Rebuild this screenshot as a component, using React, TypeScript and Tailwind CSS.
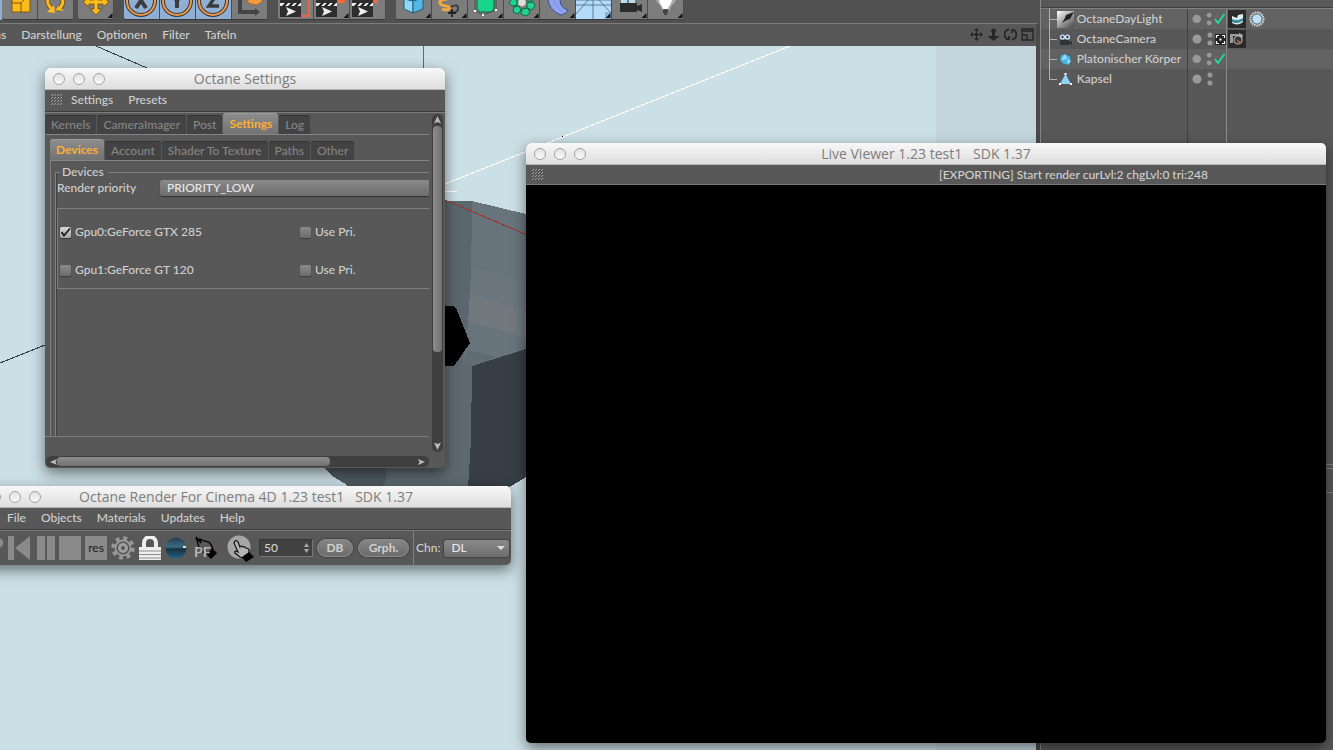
import { useState } from "react";
import type { ReactNode } from "react";
import clsx from "clsx";

/* ---------------- DATA ---------------- */

const viewportMenu = ["as", "Darstellung", "Optionen", "Filter", "Tafeln"];
const mainTabs = ["Kernels", "CameraImager", "Post", "Settings", "Log"];
const subTabs = ["Devices", "Account", "Shader To Texture", "Paths", "Other"];

const gpus = [
  { name: "Gpu0:GeForce GTX 285", enabled: true },
  { name: "Gpu1:GeForce GT 120", enabled: false },
];

/* ---------------- SHARED ---------------- */

const Grip = () => (
  <svg className="h-3 w-3 shrink-0" viewBox="0 0 12 12" stroke="#a8a8a8" strokeWidth="0.9">
    {[0, 3, 6, 9].map((y) =>
      [0, 3, 6, 9].map((x) => <path key={`${x}-${y}`} d={`M${x} ${y + 2}l2 -2`} />)
    )}
  </svg>
);

type WindowProps = {
  title: string;
  className: string;
  children: ReactNode;
};

const Window = ({ title, className, children }: WindowProps) => (
  <section
    className={clsx(
      "absolute flex flex-col overflow-hidden rounded-[5px] bg-[#585858] shadow-[0_5px_14px_rgba(0,0,0,0.5)]",
      className
    )}
  >
    <header className="relative flex h-[22px] shrink-0 items-center justify-center border-b border-[#b5b5b5] bg-linear-to-b from-[#f8f8f8] to-[#dedede]">
      <div className="absolute left-2 flex gap-2">
        {["Close", "Minimize", "Zoom"].map((label) => (
          <button
            key={label}
            aria-label={label}
            className="h-3 w-3 rounded-full border border-[#a3a3a3] bg-linear-to-b from-[#e2e2e2] to-[#fafafa]"
          />
        ))}
      </div>
      <h2 className="font-['Open_Sans',sans-serif] text-[14px] leading-5 font-normal whitespace-pre text-[#7d7d7d]">{title}</h2>
    </header>
    {children}
  </section>
);

const MenuBar = ({ items }: { items: string[] }) => (
  <nav className="flex h-[23px] shrink-0 items-center gap-[15px] border-b border-[#7c7c7c] pb-0.5 pl-1.5 shadow-[inset_0_-1px_0_#3c3c3c]">
    <Grip />
    <div className="-ml-[7px] flex gap-[15px]">
      {items.map((item) => (
        <button key={item}>{item}</button>
      ))}
    </div>
  </nav>
);

type TabsProps = {
  items: string[];
  active: string;
  onSelect: (item: string) => void;
};

const Tabs = ({ items, active, onSelect }: TabsProps) => (
  <div role="tablist" className="flex h-[22px] shrink-0 items-end gap-px border-b border-[#858585]">
    {items.map((item) => (
      <button
        key={item}
        role="tab"
        aria-selected={item === active}
        onClick={() => onSelect(item)}
        className={clsx(
          "rounded-t-[3px] border-t px-1.5 pb-px whitespace-nowrap",
          item === active
            ? "h-[21px] border-[#9a9a9a] bg-linear-to-b from-[#8c8c8c] to-[#727272] font-bold text-[#fbb034]"
            : "h-[19px] border-[#333] bg-[#434343] text-[#858585]"
        )}
      >
        {item}
      </button>
    ))}
  </div>
);

const CheckBox = ({ label, checked = false }: { label: string; checked?: boolean }) => (
  <label className="flex items-center gap-1">
    <span className="relative flex">
      <input
        type="checkbox"
        defaultChecked={checked}
        className="peer h-[11px] w-[11px] appearance-none rounded-[2px] bg-linear-to-b from-[#8a8a8a] to-[#6c6c6c] shadow-[0_1px_1px_#3a3a3a] checked:from-[#d6d6d6] checked:to-[#a8a8a8]"
      />
      <svg className="pointer-events-none absolute inset-0 hidden peer-checked:block" viewBox="0 0 11 11" fill="none" stroke="#1c1c1c" strokeWidth="1.8">
        <path d="M1.500 5l2.500 3.500L10 1.500" />
      </svg>
    </span>
    {label}
  </label>
);

/* ---------------- MAIN TOOLBAR ---------------- */

const Corner = () => <path d="M34.500 13v5h-5z" fill="#151515" />;

const Tool = ({ label, active, more, children }: { label: string; active?: boolean; more?: boolean; children: ReactNode }) => (
  <button
    aria-label={label}
    className={clsx("h-5 w-9 border-r border-b border-[#4b4b4b]", active ? "bg-[#8fb0d4]" : "bg-[#7c7c7c]")}
  >
    <svg className="h-[19px] w-full" viewBox="0 0 35 19">
      {children}
      {more && <Corner />}
    </svg>
  </button>
);

const AxisTool = ({ axis }: { axis: string }) => (
  <Tool label={`Axis ${axis}`} active>
    <circle cx="17" cy="1" r="14" fill="none" stroke="#3a3a3a" strokeWidth="4" />
    <circle cx="17" cy="1" r="14" fill="none" stroke="#f19a45" strokeWidth="2" />
    {axis === "X" && <path d="M12 -7L22 8M22 -7L12 8" stroke="#3c3c3c" strokeWidth="4" />}
    {axis === "Y" && <path d="M12 -7L17 1L22 -7M17 0V8" fill="none" stroke="#3c3c3c" strokeWidth="4" />}
    {axis === "Z" && <path d="M12 -6H21L13 6H23" fill="none" stroke="#3c3c3c" strokeWidth="3.5" />}
  </Tool>
);

const Clapper = () => (
  <>
    <path d="M2 -1h21v18H2z" fill="#2e2e2e" />
    <path d="M2 3h21v3H2z" fill="#eee" />
    <path d="M4 6l3-3h3L7 6zM10 6l3-3h3l-3 3zM16 6l3-3h3l-3 3z" fill="#1a1a1a" />
    <path d="M8 7l10 4.500L8 16l2-4.500z" fill="#eee" />
  </>
);

const ToolGroup = ({ children }: { children: ReactNode }) => (
  <div className="flex overflow-hidden rounded-b-[3px] border-b border-[#3a3a3a]">{children}</div>
);

const MainToolbar = () => (
  <div className="flex h-[23px] shrink-0 gap-2.5 overflow-hidden bg-[#515151] pb-[3px]">
    <div className="flex gap-1">
      <div className="flex">
        <div className="h-5 w-0.5 bg-[#8fb0d4]" />
        <ToolGroup>
          <Tool label="Scale">
            <path d="M10 -4h18v16H10z" fill="#fdbb1c" stroke="#7b5a12" />
            <path d="M10 3h9v9M19 3l6-6" fill="none" stroke="#7b5a12" />
          </Tool>
          <Tool label="Rotate">
            <path d="M10 -1a8.500 8.500 0 0 0 4 9.500M24 -2a8.500 8.500 0 0 1-5 11.500" fill="none" stroke="#6a4c0d" strokeWidth="4.500" />
            <path d="M10 -1a8.500 8.500 0 0 0 4 9.500M24 -2a8.500 8.500 0 0 1-5 11.500" fill="none" stroke="#fdbb1c" strokeWidth="3" />
            <path d="M9 12l8 1-1-8zM26 11l-8-1 2-4z" fill="#fdbb1c" />
          </Tool>
        </ToolGroup>
      </div>
      <ToolGroup>
        <Tool label="Move" more>
          <path d="M5 2l6-5v3h5v-5h4v5h5v-3l6 5-6 5V4h-5v5h3.500L18 15l-5.500-6H16V4h-5v3z" fill="#fdbb1c" stroke="#6a4c0d" strokeWidth="0.800" />
        </Tool>
      </ToolGroup>
    </div>
    <ToolGroup>
      <AxisTool axis="X" />
      <AxisTool axis="Y" />
      <AxisTool axis="Z" />
      <Tool label="Coordinate system">
        <path d="M8 -2v14h16" fill="none" stroke="#444" strokeWidth="4" />
        <path d="M23 8l5 4-5 4z" fill="#444" />
        <path d="M16 -3h14v5l-6 3-8-2z" fill="#f49a3f" stroke="#a3561a" strokeWidth="0.600" />
      </Tool>
    </ToolGroup>
    <ToolGroup>
      <Tool label="Render view">
        <path d="M23 16h8V-2" fill="none" stroke="#f0683c" strokeWidth="1.800" />
        <Clapper />
      </Tool>
      <Tool label="Render to picture viewer" more>
        <path d="M20 -1h11v4H20z" fill="#f0683c" />
        <Clapper />
      </Tool>
      <Tool label="Render settings">
        <path d="M16 -1h12v4H16z" fill="#f0683c" />
        <Clapper />
      </Tool>
    </ToolGroup>
    <ToolGroup>
      <Tool label="Cube" more>
        <path d="M8 -1l9 2v12l-9-4z" fill="#8bd8fa" stroke="#245a75" />
        <path d="M17 1l10-3V9l-10 4z" fill="#53b7e6" stroke="#245a75" />
      </Tool>
      <Tool label="Spline" more>
        <path d="M14 10c8-6 13-6 12-1s-5 3-8 2" fill="none" stroke="#3a3a3a" strokeWidth="1.800" />
        <path d="M17 -2c-4 2-10 1-9 5s7 2 9 4-3 4-7 2" fill="none" stroke="#f4a63f" strokeWidth="3" />
        <path d="M20 9v8M16 13h8" stroke="#222" strokeWidth="1.800" />
      </Tool>
      <Tool label="Subdivision surface" more>
        <path d="M9 -2h17v11l-3 3H12l-3-3z" fill="#17d488" stroke="#0b6b45" />
        <path d="M7 -1v12l8 4 13-5V-1" fill="none" stroke="#444" strokeWidth="0.800" />
        <path d="M6 10h2v2H6zM14 14h2v2h-2zM27 9h2v2h-2z" fill="#fff" />
      </Tool>
      <Tool label="Array" more>
        <g fill="#1fd491" stroke="#0b6b45">
          <path d="M8 -1l5 1v5l-5 1-3-3zM10 7l5-1 2 4-3 4-5-2zM18 9l6-1 2 5-4 3-5-2zM23 3l6-1 2 4-3 4-5-2zM22 -3h6v4h-6z" />
        </g>
        <path d="M14 0l4-1 4 1v5l-4 2-4-2z" fill="#ddd" stroke="#666" strokeWidth="0.600" />
      </Tool>
      <Tool label="Deformer" more>
        <path d="M8 -2c0 8 5 14 13 17 4-1 6-3 7-5-7-2-8-7-8-12z" fill="#8fa2ee" stroke="#3d4b8f" />
        <path d="M14 -2c1 6 3 10 8 13" fill="none" stroke="#7f92e0" />
      </Tool>
      <Tool label="Floor" active more>
        <path d="M0 -1h35v13h-6v7H0z" fill="#b5dbfa" />
        <path d="M0 5h35M17 -1v20M13 -1L0 14M22 -1l13 14M0 0h35" fill="none" stroke="#47657e" strokeWidth="0.800" />
      </Tool>
      <Tool label="Camera" more>
        <path d="M8 3h17v9H8zM25 6l5-2v8l-5-2z" fill="#2d2d2d" />
        <path d="M9 0h6v3H9zM17 0h6v3h-6z" fill="#b8ddf2" />
      </Tool>
      <Tool label="Light" more>
        <path d="M8 -2h20c0 6-5 6-6 12h-8c-1-6-6-6-6-12z" fill="#a9a9a9" />
        <path d="M11 -2h13c0 6-3 7-4 11h-5c-1-4-4-5-4-11z" fill="#fff" />
        <path d="M15 10h5M15 12h5M16 14h3" stroke="#333" strokeWidth="1.400" />
      </Tool>
    </ToolGroup>
  </div>
);

/* ---------------- VIEWPORT ---------------- */

const ViewportControls = () => (
  <div className="ml-auto flex items-center gap-1 pr-0.5 text-[#262626]">
    <button aria-label="Pan view">
      <svg className="h-[13px] w-[13px]" viewBox="0 0 13 13" fill="currentColor">
        <path d="M6.500 0L9 3H4zM6.500 13L4 10h5zM0 6.500L3 4v5zM13 6.500L10 9V4zM5 5h3v3H5zM6 3h1v2H6zM6 8h1v2H6zM3 6h2v1H3zM8 6h2v1H8z" />
      </svg>
    </button>
    <button aria-label="Zoom view">
      <svg className="h-[13px] w-[13px]" viewBox="0 0 13 13" fill="currentColor">
        <path d="M6.500 0L10 3.500H8V8h4.500l-6 5-6-5H5V3.500H3z" />
      </svg>
    </button>
    <button aria-label="Rotate view">
      <svg className="h-[13px] w-[13px]" viewBox="0 0 13 13" fill="none" stroke="currentColor" strokeWidth="1.800">
        <path d="M5 1.500a5 5 0 0 0-1.500 9.500M8 11.500A5 5 0 0 0 9.500 2M8 5V2h3M5 8v3H2" />
      </svg>
    </button>
    <button aria-label="Toggle view">
      <svg className="h-[13px] w-[13px]" viewBox="0 0 13 13" fill="none" stroke="currentColor" strokeWidth="1.400">
        <path d="M1 1h11v11H1zM1 3h11M1 7h5v5" />
      </svg>
    </button>
  </div>
);

const Scene = () => (
  <svg className="absolute inset-0 h-full w-full" shapeRendering="crispEdges">
    <rect x="936" width="110" height="100%" fill="#c3d6de" />
    <g transform="translate(0 -46)">
      <path d="M324 468l8 8 12 7 4 3h124V366z" fill="#505a61" />
      <path d="M382 201h90v286h-86z" fill="#5b676e" />
      <path d="M440 366h32v74l-4 48h-86z" fill="#5d696f" />
      <path d="M472 201l54 13v136l-54 16h-10l6-41 3-40z" fill="#68747b" />
      <path d="M471 267l55 15v30l-56-18z" fill="#6b757d" />
      <path d="M470 293l56 18v27l-58-17z" fill="#71797f" />
      <path d="M467 350l30 7-25 9h-10z" fill="#5f6d73" />
      <path d="M472 366l54-17v128l-18 11h-40l3-48z" fill="#383e46" />
      <path d="M440 306h13l3 2 14 35-16 23h-14z" fill="#000" />
      <g fill="none">
        <path d="M96 46l51 22M0 363l45-18" stroke="#33424a" />
        <path d="M445 184L790 46M445 191l12 1" stroke="#fff" />
        <path d="M445 200l82 35" stroke="#a52f2f" />
      </g>
      <rect x="423" y="46" width="1" height="24" fill="#159a3c" />
      <rect x="562" y="136" width="1" height="1" fill="#000" />
    </g>
  </svg>
);

/* ---------------- OBJECT MANAGER ---------------- */

const Check = () => (
  <svg className="h-3 w-3" viewBox="0 0 12 12" fill="none" stroke="#1fe0a0" strokeWidth="1.800">
    <path d="M1 6l3 4L10.500 1" />
  </svg>
);

const objects = [
  {
    name: "OctaneDayLight",
    icon: (
      <svg viewBox="0 0 17 17">
        <defs>
          <linearGradient id="sky" x2="0.800" y2="1">
            <stop stopColor="#fff" />
            <stop offset="1" stopColor="#555" />
          </linearGradient>
        </defs>
        <path d="M0 0h17v17H0z" fill="url(#sky)" />
        <path d="M17 1l-8 3-1 3-3 5 5-3 3-1z" fill="#222" />
      </svg>
    ),
    state: <Check />,
    tags: (
      <>
        <svg className="h-[18px] w-[18px]" viewBox="0 0 18 18">
          <path d="M0 0h18v18H0z" fill="#2b2b2b" />
          <path d="M4 6l5 2 1-3 5-1v8c-3 3-8 3-11 1z" fill="#dcecef" />
          <path d="M4 9c4 2 8 1 11-1v3c-4 2-8 3-11 1z" fill="#3d8a9b" />
        </svg>
        <svg className="h-4 w-4" viewBox="0 0 16 16">
          <circle cx="8" cy="8" r="6.500" fill="none" stroke="#d6d6d6" strokeWidth="2" strokeDasharray="1.600 0.700" />
          <circle cx="8" cy="8" r="4.800" fill="#bfe2fb" stroke="#6c8aa2" strokeWidth="0.700" />
        </svg>
      </>
    ),
  },
  {
    name: "OctaneCamera",
    icon: (
      <svg viewBox="0 0 17 17">
        <path d="M3 9h9v5H3zM12 11l3-1v4l-3-1z" fill="#2d3338" />
        <circle cx="5.500" cy="6" r="1.900" fill="#335" stroke="#cfe8fa" strokeWidth="1.400" />
        <circle cx="10.500" cy="6" r="1.900" fill="#335" stroke="#cfe8fa" strokeWidth="1.400" />
      </svg>
    ),
    state: (
      <svg className="h-[11px] w-[11px]" viewBox="0 0 11 11" fill="none" stroke="#fff" strokeWidth="1.200">
        <path d="M0 0h11v11H0z" fill="#222" stroke="none" />
        <path d="M1.500 4V1.500H4M7 1.500h2.500V4M9.500 7v2.500H7M4 9.500H1.500V7" />
        <path d="M4.500 4.500h2v2h-2z" fill="#fff" stroke="none" />
      </svg>
    ),
    tags: (
      <svg className="h-[18px] w-[18px]" viewBox="0 0 18 18">
        <path d="M0 0h18v18H0z" fill="#2b2b2b" />
        <path d="M2 4h3v9H2zM5 4h6v2H5z" fill="#999" />
        <circle cx="10" cy="10" r="4" fill="#333" stroke="#aaa" strokeWidth="1.200" />
        <path d="M8 9l5 3-2 2z" fill="#c4604f" />
        <path d="M11 3l4 2-1 4-3-3z" fill="#aaa" />
      </svg>
    ),
  },
  {
    name: "Platonischer Körper",
    icon: (
      <svg viewBox="0 0 17 17">
        <path d="M8 3l5 2 1 5-3 4-5-1-3-4 1-5z" fill="#4db4e2" stroke="#25688a" strokeWidth="0.600" />
        <path d="M8 3l2 5-6 1zM10 8l4 2-3 4z" fill="#9bdcf8" />
      </svg>
    ),
    state: <Check />,
    tags: null,
  },
  {
    name: "Kapsel",
    icon: (
      <svg viewBox="0 0 17 17">
        <path d="M8.500 3l5.500 10H3z" fill="#8cd4f6" />
        <path d="M7.500 2h2v2h-2zM2 12h2v2H2zM13 12h2v2h-2z" fill="#fff" />
      </svg>
    ),
    state: null,
    tags: null,
  },
];

const ObjectManager = () => (
  <aside className="flex w-[22%] shrink-0 flex-col border-l border-[#868686] bg-[#585858]">
    <div className="flex h-[62%] flex-col border-b border-[#808080]">
      <div className="flex h-[9px] shrink-0 border-b border-[#808080] shadow-[inset_0_-1px_0_#404040]" />
      <ul>
        {objects.map((object, index) => (
          <li
            key={object.name}
            className={clsx("grid h-5 grid-cols-[147px_39px_1fr]", index % 2 === 0 ? "bg-[#626262]" : "bg-[#585858]")}
          >
            <div className="flex items-center border-r border-[#404040] pl-2">
              <svg className="h-5 w-2" viewBox="0 0 8 20" stroke="#b0b0b0" shapeRendering="crispEdges">
                <path d={index === objects.length - 1 ? "M0.500 0V10.500H8" : "M0.500 0V20M0 10.500H8"} fill="none" />
              </svg>
              <div className="h-[17px] w-[17px]">{object.icon}</div>
              <span className="ml-[3px] whitespace-nowrap">{object.name}</span>
            </div>
            <div className="flex items-center border-r border-[#8a8a8a] pl-1">
              <svg className="h-5 w-[21px]" viewBox="0 0 21 20" fill="#999">
                <circle cx="5" cy="10" r="4.500" />
                <circle cx="18" cy="6" r="2.500" />
                <circle cx="18" cy="14" r="2.500" />
              </svg>
              <div className="ml-0.5">{object.state}</div>
            </div>
            <div className="flex items-center gap-[3px] pl-px">{object.tags}</div>
          </li>
        ))}
      </ul>
      <div className="grid flex-1 grid-cols-[147px_39px_1fr]">
        <div className="border-r border-[#404040]" />
        <div className="border-r border-[#8a8a8a]" />
      </div>
    </div>
    <div className="h-1 border-b border-[#808080]" />
    <div className="h-6 border-b border-[#808080]" />
  </aside>
);

/* ---------------- OCTANE SETTINGS ---------------- */

const SettingsWindow = () => {
  const [tab, setTab] = useState("Settings");
  const [subTab, setSubTab] = useState("Devices");

  return (
    <Window title="Octane Settings" className="top-[68px] left-[45px] h-[400px] w-[400px]">
      <MenuBar items={["Settings", "Presets"]} />
      <div className="flex min-h-0 flex-1">
        <div className="flex min-w-0 flex-1 flex-col">
          <div className="flex min-h-0 flex-1 flex-col border-b border-[#7e7e7e]">
            <Tabs items={mainTabs} active={tab} onSelect={setTab} />
            <div className="mt-1 ml-[5px] flex min-h-0 flex-1 flex-col">
              <Tabs items={subTabs} active={subTab} onSelect={setSubTab} />
              <div className="flex flex-1 flex-col border-l border-[#7e7e7e] pt-[3px] pl-1">
                <fieldset className="min-w-0 flex-1 border-t border-l border-[#808080] shadow-[inset_1px_0_0_#404040]">
                  <legend className="ml-1 pr-1 pl-0.5 leading-4">Devices</legend>
                  <label className="flex h-4 items-center pl-px">
                    <span className="w-[103px]">Render priority</span>
                    <select className="h-4 min-w-0 flex-1 appearance-none rounded-l-[3px] bg-linear-to-b from-[#8a8a8a] to-[#6d6d6d] pl-[7px] leading-4 text-[#e8e8e8] shadow-[0_1px_1px_#333]">
                      <option>PRIORITY_LOW</option>
                    </select>
                  </label>
                  <div className="mt-3 ml-px h-[81px] border-y border-l border-[#7e7e7e] pt-1 pl-0.5">
                    {gpus.map((gpu) => (
                      <div key={gpu.name} className="grid h-[38px] grid-cols-[240px_1fr] items-center">
                        <CheckBox label={gpu.name} checked={gpu.enabled} />
                        <CheckBox label="Use Pri." />
                      </div>
                    ))}
                  </div>
                </fieldset>
              </div>
            </div>
          </div>
          <div className="mt-[19px] mb-px ml-px flex h-[11px] items-center rounded-full bg-[#3f3f3f] px-1">
            <svg className="h-2 w-[7px]" viewBox="0 0 7 8" fill="#bbb"><path d="M7 1L0 4l7 3-1.500-3z" /></svg>
            <div className="mr-0.5 flex-1">
              <div className="h-[9px] w-[76%] rounded-[4px] bg-linear-to-b from-[#8d8d8d] to-[#727272]" />
            </div>
            <svg className="h-2 w-[7px]" viewBox="0 0 7 8" fill="#bbb"><path d="M0 1l7 3-7 3 1.500-3z" /></svg>
          </div>
        </div>
        <div className="mt-px mr-0.5 mb-4 ml-[3px] flex w-[11px] flex-col items-center rounded-full bg-[#3f3f3f] py-0.5">
          <svg className="h-2 w-[7px]" viewBox="0 0 7 8" fill="#bbb"><path d="M3.500 0L7 7.500 3.500 6 0 7.500z" /></svg>
          <div className="my-0.5 w-full flex-1">
            <div className="mx-px h-[72%] rounded-[4px] bg-linear-to-r from-[#8d8d8d] to-[#707070]" />
          </div>
          <svg className="h-2 w-[7px]" viewBox="0 0 7 8" fill="#bbb"><path d="M3.500 8L7 0.500 3.500 2 0 0.500z" /></svg>
        </div>
      </div>
    </Window>
  );
};

/* ---------------- OCTANE RENDER ---------------- */

const renderTools = [
  { label: "Send scene", width: 4, art: <path d="M-2 2c7 0 7 9 0 10" fill="#8a8a8a" /> },
  { label: "Restart", width: 25, art: <path d="M0 0h6v24H0zM22 0v24L7 12z" fill="#8a8a8a" /> },
  { label: "Pause", width: 18, art: <path d="M0 0h8v24H0zM10 0h8v24h-8z" fill="#8a8a8a" /> },
  { label: "Stop", width: 22, art: <path d="M0 0h22v24H0z" fill="#8a8a8a" /> },
];

const RenderWindow = () => (
  <Window title="Octane Render For Cinema 4D 1.23 test1   SDK 1.37" className="top-[486px] -left-[19px] w-[530px]">
    <MenuBar items={["File", "Objects", "Materials", "Updates", "Help"]} />
    <div className="flex h-[34px] items-center pl-[19px]">
      <div className="flex items-center gap-1">
        {renderTools.map((tool) => (
          <button key={tool.label} aria-label={tool.label}>
            <svg width={tool.width} height="24" viewBox={`0 0 ${tool.width} 24`}>{tool.art}</svg>
          </button>
        ))}
        <button className="h-6 w-[22px] bg-[#8a8a8a] text-[12px] text-[#222]">res</button>
        <button aria-label="Render settings">
          <svg width="24" height="24" viewBox="0 0 24 24">
            <circle cx="12" cy="12" r="9.500" fill="none" stroke="#979797" strokeWidth="4.500" strokeDasharray="3.730 3.730" />
            <circle cx="12" cy="12" r="8.500" fill="#979797" />
            <circle cx="12" cy="12" r="6.500" fill="#555" />
            <circle cx="12" cy="12" r="3.500" fill="none" stroke="#a0a0a0" strokeWidth="3" />
          </svg>
        </button>
        <button aria-label="Lock resolution">
          <svg width="22" height="24" viewBox="0 0 22 24">
            <path d="M5 13V7a6 6 0 0 1 12 0v6" fill="none" stroke="#eee" strokeWidth="4" />
            <path d="M0 11h22v13H0z" fill="#eee" />
            <path d="M0 15h22M0 18.500h22M0 22h22" stroke="#8d8d8d" />
          </svg>
        </button>
        <button aria-label="Material preview">
          <svg width="22" height="24" viewBox="0 0 22 24">
            <defs>
              <linearGradient id="ball" x2="0" y2="1">
                <stop stopColor="#233d4d" />
                <stop offset="0.450" stopColor="#3c6b80" />
                <stop offset="0.550" stopColor="#173142" />
                <stop offset="1" stopColor="#1d6486" />
              </linearGradient>
            </defs>
            <circle cx="11" cy="12" r="10.500" fill="url(#ball)" />
            <path d="M18 10h3v2h-3z" fill="#ecd9aa" />
          </svg>
        </button>
      </div>
      <button className="relative ml-[7px] h-6 w-6">
        <svg className="absolute inset-0" width="24" height="24" viewBox="0 0 24 24">
          <path d="M2 1l5 6-1-4 4 2 5 1 3 4 1 4-4 4-6-2-4-5z" fill="#5a5a5a" stroke="#000" strokeWidth="1.300" />
          <path d="M13 19l5-7 5 5-6 6z" fill="#000" />
        </svg>
        <span className="relative flex pt-2 text-[14px] leading-4 font-bold text-[#b4b4b4]">PF</span>
      </button>
      <button className="ml-[9px]" aria-label="Pick focus">
        <svg width="28" height="28" viewBox="0 0 28 28">
          <circle cx="12" cy="13" r="11.500" fill="#a6a6a6" />
          <path d="M8 7q2-1 3 1l2 5q1-2 3 0 1-1 3 1 3 0 3 3l0 3-6 4-3-1-5-4q-1-2 1-2l2 1-4-9z" fill="#b4b4b4" stroke="#111" strokeWidth="1.200" />
          <path d="M15 23l7-5 5 5-8 5z" fill="#000" />
        </svg>
      </button>
      <div className="ml-1 flex h-[18px] w-[54px] items-center border border-[#363636] border-r-[#777] border-b-[#777] bg-[#414141] pr-0.5 pl-1">
        <input aria-label="Samples" defaultValue="50" className="w-full min-w-0 bg-transparent leading-4 outline-none" />
        <svg className="h-2.5 w-[7px] shrink-0" viewBox="0 0 7 10" fill="#a8a8a8"><path d="M3.500 0L6 4H1zM3.500 10L1 6h5z" /></svg>
      </div>
      <button className="ml-1 h-[18px] w-9 rounded-full border border-[#8c8c8c] bg-linear-to-b from-[#858585] to-[#6c6c6c] leading-4 font-bold shadow-[0_0_1px_1px_#444]">DB</button>
      <button className="ml-[5px] h-[18px] w-[51px] rounded-full border border-[#8c8c8c] bg-linear-to-b from-[#858585] to-[#6c6c6c] leading-4 font-bold shadow-[0_0_1px_1px_#444]">Grph.</button>
      <label className="ml-1 flex h-full flex-1 items-center gap-1 border-l border-[#7e7e7e] pr-0.5 pl-0.5">
        Chn:
        <span className="relative flex flex-1 items-center">
          <select className="h-[17px] w-full appearance-none rounded-[3px] bg-linear-to-b from-[#8a8a8a] to-[#6d6d6d] pl-[7px] leading-4 text-[#e8e8e8] shadow-[0_0_1px_1px_#444]">
            <option>DL</option>
          </select>
          <svg className="pointer-events-none absolute right-1 h-1 w-2" viewBox="0 0 8 4" fill="#ddd"><path d="M0 0h8L4 4z" /></svg>
        </span>
      </label>
    </div>
  </Window>
);

/* ---------------- LIVE VIEWER ---------------- */

const LiveViewer = () => (
  <Window title="Live Viewer 1.23 test1   SDK 1.37" className="top-[143px] right-[7px] bottom-[7px] left-[526px]">
    <div className="grid h-5 shrink-0 grid-cols-2 items-center border-b border-[#7c7c7c] pl-1.5">
      <Grip />
      <output className="pl-2.5 whitespace-nowrap">[EXPORTING] Start render curLvl:2 chgLvl:0 tri:248</output>
    </div>
    <div className="flex-1 bg-black" />
  </Window>
);

/* ---------------- APP ---------------- */

const App = () => (
  <div className="relative flex h-screen overflow-hidden bg-[#515151] font-['Lato',sans-serif] text-[12px] leading-4 font-medium text-[#d0d0d0]">
    <main className="flex min-w-0 flex-1 flex-col">
      <MainToolbar />
      <div className="flex min-h-0 flex-1 flex-col border-t border-r-4 border-t-[#7c7c7c] border-r-[#4a4a4a] bg-[#585858]">
        <nav className="flex h-[22px] shrink-0 items-center pb-px">
          <div className="-ml-[5px] flex gap-[15px]">
            {viewportMenu.map((item) => (
              <button key={item}>{item}</button>
            ))}
          </div>
          <ViewportControls />
        </nav>
        <div className="relative flex-1 overflow-hidden bg-[#cbdfe6]">
          <Scene />
        </div>
      </div>
    </main>
    <ObjectManager />

    <SettingsWindow />
    <RenderWindow />
    <LiveViewer />
  </div>
);

export default App;
